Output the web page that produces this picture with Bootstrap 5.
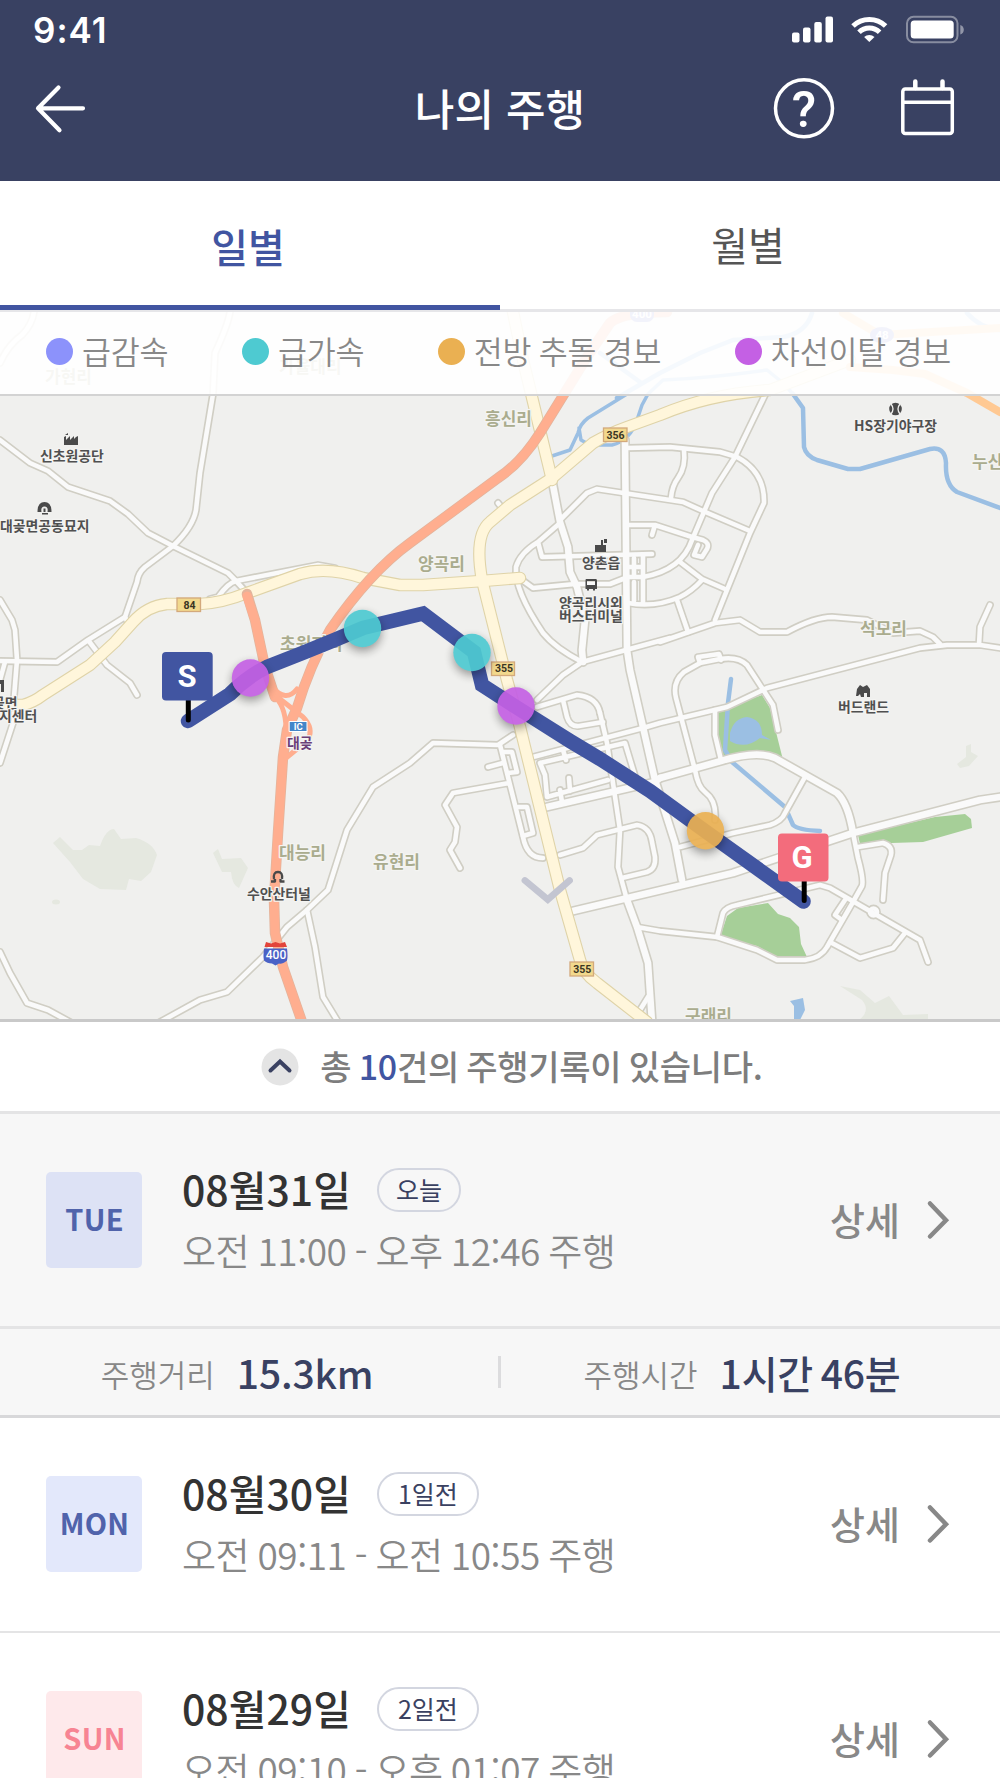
<!DOCTYPE html>
<html lang="ko">

<head>
    <meta charset="UTF-8">
    <meta name="viewport" content="width=device-width, initial-scale=1.0">
    <link href="https://cdn.jsdelivr.net/npm/bootstrap@5.3.0/dist/css/bootstrap.min.css" rel="stylesheet">
    <title>나의 주행</title>
    <style>
        body {
            width: 1000px;
            height: 1778px;
            overflow: hidden;
            background: #fff;
            font-family: "Noto Sans CJK KR", sans-serif;
            color: #888;
        }

        svg {
            display: block;
            flex: none;
        }

        .top-area {
            height: 181px;
            background: #394162;
            color: #fff;
        }

        .status-row {
            height: 58px;
            padding: 1px 34px 0 33px;
        }

        .clock {
            font: 600 35px/58px Inter, sans-serif;
            letter-spacing: 1px;
        }

        .title-row {
            display: grid;
            grid-template-columns: 1fr auto 1fr;
            height: 100px;
            padding: 0 34px;
        }

        .title-row h1 {
            padding-bottom: 2px;
            font-size: 43px;
            font-weight: 500;
            line-height: 60px;
        }

        .period-tabs {
            height: 131px;
            border-bottom: 3px solid #e6e6e9;
        }

        .period-tabs .nav-link {
            height: 128px;
            padding: 0 4px 0 0;
            border-radius: 0;
            font-size: 40px;
            line-height: 126px;
            color: #555;
        }

        .period-tabs .nav-link.active {
            height: 129px;
            line-height: 130px;
            font-weight: 500;
            color: #4155a1;
            border-bottom: 5px solid #4155a1;
        }

        .map-area {
            height: 710px;
            border-bottom: 3px solid #c9c9c9;
        }

        .legend-bar {
            height: 84px;
            padding: 0 49px 3px 46px;
            background: rgba(255, 255, 255, .9);
            border-bottom: 2px solid #d3d3d3;
            font-size: 31.5px;
            font-weight: 350;
            line-height: 40px;
            letter-spacing: -.2px;
            word-spacing: -1.2px;
        }

        .legend-bar b {
            padding-bottom: 3px;
            font-weight: 350;
        }

        .dot {
            width: 27px;
            height: 27px;
            margin-right: 9px;
            border-radius: 50%;
        }

        .dot-brake { background: #8c92fb; }
        .dot-accel { background: #4ecad1; }
        .dot-front { background: #eab052; }
        .dot-lane { background: #c460e4; }

        .summary-row {
            height: 92px;
            padding-left: 24px;
            border-bottom: 3px solid #e4e4e5;
            font-size: 34px;
            font-weight: 500;
            letter-spacing: -.25px;
            word-spacing: -2px;
            color: #7d7d7d;
        }

        .summary-row svg { margin-right: 17px; }

        .summary-row span { padding-bottom: 2px; }

        .summary-row b {
            font-weight: 500;
            color: #4155a1;
        }

        .record {
            height: 215px;
            padding: 0 49px 1px 46px;
            border-bottom: 2px solid #e4e4e5;
        }

        .record.open {
            padding-bottom: 0;
            background: #f7f7f7;
            border-bottom-width: 3px;
        }

        .day-box {
            width: 96px;
            height: 96px;
            padding: 0 0 2px 1px;
            border-radius: 5px;
            background: #e3e8fb;
            color: #5063ab;
            font-size: 29px;
            font-weight: 700;
            letter-spacing: .3px;
        }

        .open .day-box { background: #dde2f5; }

        .day-box.holiday {
            background: #fee9eb;
            color: #f78493;
        }

        .record h2 {
            padding-bottom: 3px;
            font-size: 41px;
            font-weight: 500;
            line-height: 58px;
            color: #333;
        }

        .when {
            font-size: 37px;
            font-weight: 350;
            line-height: 61px;
            letter-spacing: -.45px;
            word-spacing: -1.6px;
        }

        .ago {
            height: 44px;
            margin: 1px 0 0 26px;
            padding: 0 17px;
            border: 2px solid #d3d6e0;
            border-radius: 22px;
            font-size: 25px;
            line-height: 38px;
            color: #3a4161;
        }

        .ago-past { padding: 0 19px; }

        .detail {
            font-size: 38px;
            font-weight: 500;
            color: #888;
            text-decoration: none;
        }

        .detail span { padding-bottom: 3px; }

        .detail svg { margin-left: 25px; }

        .totals {
            height: 89px;
            background: #f7f7f7;
            border-bottom: 3px solid #d8d8da;
            font-size: 31px;
            font-weight: 350;
        }

        .totals span { padding-top: 3px; }

        .totals strong {
            margin-left: 22px;
            font-size: 39px;
            font-weight: 500;
            word-spacing: -3px;
            letter-spacing: -.2px;
            color: #394162;
        }

        .total-km {
            width: 498px;
            padding: 1px 24px 0 0;
        }

        .total-time {
            width: 499px;
            padding: 1px 17px 0 0;
        }

        .totals .vr {
            align-self: center;
            width: 3px;
            height: 32px;
            opacity: 1;
            background: #dcdcde;
        }

        /* map drawing */
        .road-edge { stroke: #d0cec4; stroke-width: 7.8; }
        .road-fill { stroke: #fafafa; stroke-width: 4.6; }
        .wide-edge { stroke: #d0cec4; stroke-width: 9.8; }
        .wide-fill { stroke: #fafafa; stroke-width: 6.6; }
        .route-edge { stroke: #dfd3a8; stroke-width: 12.5; }
        .route-fill { stroke: #fff6db; stroke-width: 10.3; }
        .water { stroke: #9bbfe3; stroke-width: 4.5; }
        .halo text { paint-order: stroke; stroke: #f4f4f2; stroke-width: 2.5px; }
        .village { font-size: 17px; font-weight: 700; fill: #aaac8e; }
        .poi { font-size: 13.9px; font-weight: 700; fill: #505050; }
        .sign { font: 700 10.5px Roboto, sans-serif; fill: #3a3524; }
        .pin-text { font: 700 31px Roboto, sans-serif; fill: #fff; }
        .event { opacity: .92; filter: drop-shadow(0 4px 5px rgba(0, 0, 0, .4)); }
    </style>
</head>

<body>
    <header class="top-area">
        <div class="status-row d-flex justify-content-between align-items-center">
            <span class="clock">9:41</span>
            <svg width="175" height="32" viewBox="791 14 175 32" fill="#fff">
                <rect x="792" y="32.5" width="7.5" height="10" rx="2" />
                <rect x="803" y="27.5" width="7.5" height="15" rx="2" />
                <rect x="814.3" y="22" width="7.5" height="20.5" rx="2" />
                <rect x="825.5" y="16.5" width="7.5" height="26" rx="2" />
                <path d="M853 26a23.5 23.5 0 0 1 32.600 0M859 32.3a14.5 14.5 0 0 1 20.600 0" fill="none" stroke="#fff" stroke-width="5" />
                <path d="M869.3 42l-5.200-5a7.500 7.500 0 0 1 10.400 0z" />
                <rect x="907" y="16.800" width="50.500" height="25.500" rx="6.500" fill="none" stroke="#fff" stroke-opacity=".4" stroke-width="2" />
                <rect x="910.700" y="20.500" width="43" height="18" rx="3.500" />
                <path d="M960.300 25v9.500q3.500-1.200 3.500-4.700T960.300 25z" fill-opacity=".45" />
            </svg>
        </div>
        <div class="title-row align-items-center">
            <a href="#" aria-label="뒤로">
                <svg width="52" height="52" viewBox="34 82 52 52" fill="none" stroke="#fff" stroke-width="4.2" stroke-linecap="round" stroke-linejoin="round">
                    <path d="M58.5 87.5L38 108.3l21.500 22M38 108.3h45" />
                </svg>
            </a>
            <h1 class="m-0">나의 주행</h1>
            <svg class="ms-auto" width="194" height="64" viewBox="772 76 194 64" fill="none" stroke="#fff" stroke-width="3.5">
                <circle cx="804" cy="108.3" r="28.5" />
                <text x="804" y="127" text-anchor="middle" font-family="Roboto, sans-serif" font-weight="500" font-size="50" fill="#fff" stroke="none">?</text>
                <rect x="902.8" y="89" width="49.5" height="44.5" rx="2.5" />
                <path d="M903 102.3h49" />
                <path d="M915.3 88v-6.500M942.5 88v-6.500" stroke-width="4.5" stroke-linecap="round" />
            </svg>
        </div>
    </header>

    <nav class="period-tabs nav nav-justified">
        <a class="nav-link active" href="#">일별</a>
        <a class="nav-link" href="#">월별</a>
    </nav>

    <section class="map-area position-relative overflow-hidden">
        <svg width="1000" height="707" viewBox="0 312 1000 707" fill="none" stroke-linejoin="round" stroke-linecap="round">
            <defs>
                <g id="smallRoads">
                    <path d="M0 440L30 463L48 471L68 487L110 501L128 514L148 533L173 546L228 573L236 581L247 593" />
                    <path d="M230 312Q228 325 215 353L213 394L200 473L196 510Q193 527 173 546L145 567Q138 573 137 582L125 617L127 621" />
                    <path d="M125 617L88 640L57 662L0 661M88 640L107 665L130 683L137 695" />
                    <path d="M0 600L12 620L15 630L17 660L14 697V720L0 763M5 662L0 680" />
                    <path d="M34 312Q32 325 22 335Q8 345 0 363" />
                    <path d="M236 581L318 565L335 568M236 581Q228 583 218 597L210 599" />
                    <path d="M627 448L670 447L720 452L737 457Q765 472 764 503L750 533L727 590L715 620" />
                    <path d="M765 395L735 457L712 493L692 540Q682 570 643 577H628L610 584H575L533 588L522 580" />
                    <path d="M560 520L587 493L597 489L670 500L683 502L703 511L750 531" />
                    <path d="M684 450Q686 467 678 478Q672 486 671 498" />
                    <path d="M627 525H655L692 537L703 540Q710 543 707 549L702 557L694 555L698 545M655 525L652 535" />
                    <path d="M560 523L538 542Q520 553 516 567Q514 590 543 633Q555 648 582 662M538 542L542 557L652 554" />
                    <path d="M643 555V603M628 603Q655 608 680 597Q692 591 702 580M634 558V575M634 582V601M641 567H628" />
                    <path d="M680 562L702 579L725 589M677 600L688 632" />
                    <path d="M670 638L582 662L563 675L537 700M537 707L577 695Q597 697 600 713" />
                    <path d="M660 642L715 623L740 620L760 632H787Q815 617 832 617L867 620L893 633L920 631L933 637L940 644" />
                    <path d="M1000 648L980 645H947L920 648L767 688L727 707L660 723L643 728L533 757M990 605L980 627L979 645" />
                    <path d="M773 705L747 665Q738 656 720 659L700 663L684 672Q672 682 676 698L695 770Q698 787 705 792Q717 801 715 820M773 705L778 730" />
                    <path d="M700 663L698 657L719 654L721 660M715 710V735L721 760" />
                    <path d="M805 777L785 813Q782 821 770 825L733 833L680 847M717 937L723 913Q726 907 737 905L820 885L830 888L920 940L928 962" />
                    <path d="M660 931L717 937L757 950L777 960H805Q821 958 827 947L853 902L862 886Q864 880 858 858L853 833M637 927L660 931" />
                    <path d="M830 942L860 958L893 948L905 933M845 900L835 915L842 920M858 847L883 843Q893 846 891 855L885 873L883 900" />
                    <path d="M513 735L498 745L433 743L410 763L373 787L347 830L328 890L307 910L287 927L263 957L227 992L200 1000L160 1022" />
                    <path d="M307 910L315 947L323 997L337 1020M0 952L10 973L27 1003L48 1010L70 1022" />
                    <path d="M500 745L523 837Q527 858 543 858M509 783L453 793L445 805L457 827L455 842L450 850L460 868" />
                    <path d="M488 767L503 763M503 752H512L517 772L508 773M518 807H527L533 833L523 836" />
                    <path d="M563 700L567 717Q570 727 579 726L603 722M540 763L545 775L547 797L608 780M540 763L625 743L635 776M563 750L566 760M569 778L570 791M560 790L562 802" />
                    <path d="M560 855L583 848L597 835L637 825Q650 827 652 842L655 857Q656 869 647 872L622 878M648 997L640 1010" />
                    <path d="M498 503L505 512" />
                    <path d="M600 713L607 743L620 830L618 867L627 900" />
                    <circle cx="873.5" cy="912" r="3.5" />
                </g>
                <g id="wideRoads">
                    <path d="M552 480L560 522L568 547L570 572L577 587L585 620L582 650L583 662" />
                    <path d="M625 440L627 650L630 670L643 727L655 780L675 843L682 880" />
                    <path d="M627 900L637 927L648 963L652 1022" />
                    <path d="M660 778L721 761Q757 750 775 758L837 793Q848 803 853 833L733 873L573 911M853 833L980 800L1000 797" />
                    <path d="M547 807L655 782L660 778" />
                </g>
                <g id="yellowRoads">
                    <path d="M513 312L523 360L552 480" />
                    <path d="M0 705H23Q34 702 43 695L90 665L115 642L133 622Q147 606 167 604H200Q222 603 247 593L300 574Q327 566 363 578L400 585H423L482 581L520 578" />
                    <path d="M850 360L770 390Q710 394 660 415L627 427Q610 433 593 443L552 478L510 505L490 522Q474 535 482 580L507 680L520 727L560 890L580 960Q583 973 597 983L647 1022" />
                </g>
            </defs>
            <rect y="312" width="1000" height="707" fill="#f0f0ee" />

            <!-- hills and parks -->
            <g fill="#e5e8e0">
                <path d="M53 843L60 837L73 850L82 850L89 845L100 846Q106 829 114 829L121 839L136 838Q153 843 157 855L151 872L141 881L129 879L126 890L100 889L83 879L70 862z" />
                <path d="M213 853L218 849L222 859L241 858L248 868L239 888Q232 885 231 872L222 872z" />
                <ellipse cx="56" cy="902" rx="4" ry="2.5" />
                <path d="M957 764L966 757V746L971 744V752L978 756L969 766L960 768z" />
                <path d="M840 986L860 990L875 1003L889 996L903 1015L928 1014V1022H856Q872 1012 862 1000z" />
            </g>
            <g fill="#a6cf98">
                <path d="M718 711L762 695L770 708L783 760Q765 750 723 760L717 738z" />
                <path d="M858 835L935 817L965 814L971 819L972 828L923 842L860 844z" />
                <path d="M720 937L727 916L738 908L768 903L778 914L790 918L799 927L801 944L807 957H777L757 946z" />
            </g>

            <g class="water">
                <path d="M627 394L588 418Q580 424 578 433L570 450L552 456M579 428L581 440L590 445H612Q630 441 637 420L642 405L648 394L663 380Q710 378 767 370L783 383L793 394" stroke-width="3.5" />
                <path d="M793 394L803 408L804 447Q806 456 817 460L848 469H860L930 449Q945 446 946 463Q945 485 957 492L1000 508" />
                <path d="M812 313Q806 333 783 337L733 340L700 353L660 373L617 398M600 353L640 382M967 313Q980 328 1000 330" />
                <path d="M731 679L728 703L725 750L732 762L785 807L793 825Q798 830 820 831" />
            </g>
            <path d="M730 733Q734 718 747 717Q762 719 762 735L771 740L760 738Q745 750 730 741z" fill="#9bbfe3" />
            <path d="M790 1001L803 998L805 1010L799 1022H794V1006z" fill="#9bbfe3" />

            <use href="#smallRoads" class="road-edge" />
            <use href="#wideRoads" class="wide-edge" />
            <use href="#smallRoads" class="road-fill" />
            <use href="#wideRoads" class="wide-fill" />
            <use href="#yellowRoads" class="route-edge" />
            <use href="#yellowRoads" class="route-fill" />

            <!-- expressways -->
            <path d="M843 313L880 335L1000 328M850 367L893 370L925 374L967 393L1000 412" stroke="#ffc993" stroke-width="8" />
            <g stroke="#e3b49c" stroke-width="10.5">
                <path d="M667 312Q622 312 610 323L587 357L540 433Q521 463 498 478L410 543Q370 572 330 630Q310 665 297 708L287 730L283 757L278 833L274 900L275 933L283 967L302 1022" />
                <path d="M247 594L255 620L265 667L275 697" />
            </g>
            <g stroke="#ffae8f">
                <path d="M667 312Q622 312 610 323L587 357L540 433Q521 463 498 478L410 543Q370 572 330 630Q310 665 297 708L287 730L283 757L278 833L274 900L275 933L283 967L302 1022" stroke-width="9" />
                <path d="M247 596L255 620L265 667L275 697" stroke-width="9" />
                <path d="M272 687Q286 703 297 689M275 697Q287 708 286 735M280 699L303 717Q314 728 308 740L286 758" stroke-width="5" />
            </g>

            <g class="halo" font-family="Noto Sans CJK KR, sans-serif">
                <g class="village">
                    <text x="45" y="383">가현리</text>
                    <text x="279" y="373">가율대리</text>
                    <text x="485" y="425">흥신리</text>
                    <text x="418" y="570">양곡리</text>
                    <text x="280" y="650">초원지리</text>
                    <text x="860" y="635">석모리</text>
                    <text x="972" y="468">누산리</text>
                    <text x="279" y="859">대능리</text>
                    <text x="373" y="868">유현리</text>
                    <text x="685" y="1022">구래리</text>
                </g>
                <g class="poi">
                    <text x="40" y="461">신초원공단</text>
                    <text x="0" y="531">대곶면공동묘지</text>
                    <text x="-8" y="708">곶면</text>
                    <text x="-1" y="721">지센터</text>
                    <text x="854" y="431">HS장기야구장</text>
                    <text x="582" y="568">양촌읍</text>
                    <text x="559" y="608">양곡리시외</text>
                    <text x="559" y="620.5">버스터미널</text>
                    <text x="838" y="712">버드랜드</text>
                    <text x="247" y="899">수안산터널</text>
                    <text x="287" y="747.5" fill="#6b3f78">대곶</text>
                </g>
            </g>

            <!-- place symbols -->
            <g fill="#4a4a4a">
                <path d="M64 445v-8l2-1v4l4-4v4l4-4v3l2-2 2-1v9zM65 435l3-2v2z" />
                <path d="M37.500 512q0-10 7-10t7 10h-4q1-5.500-3-5.500t-3 5.500z M42 513h6v1.500h-6zM43.500 508.500h2v3.500h-2z" />
                <circle cx="895.5" cy="409" r="6.3" />
                <path d="M891 404q4 5 0 10M900 404q-4 5 0 10" stroke="#f0f0ee" stroke-width="1.3" fill="none" />
                <path d="M595 545h7v7h-7zM601 540h2v12h-2zM604 539h3v4h-3zM603 545h3v7h-3z" />
                <path d="M586 579h10q1 0 1 2v8h-2v1.500h-2V589h-4v1.500h-2V589h-1.500v-8q0-2 .5-2zm1 2v4h8v-4z" fill-rule="evenodd" />
                <path d="M857 689l3-4 3 2 4-2 3 4v8h-3v-4h-3v4h-3l-1-3-2 2h-2z" />
                <path d="M0 680h4v12H1v-8H0z" />
            </g>
            <path d="M274 879q-1-7 4-7t4 7M271 881.500h4v-2.500M284.500 881.500h-4v-2.500" stroke="#4a4a4a" stroke-width="2.300" stroke-linecap="butt" />

            <!-- road signs -->
            <g fill="#f2d98d" stroke="#d3a97c" stroke-width="1.3" stroke-linejoin="miter">
                <rect x="177" y="598" width="23.5" height="13.5" />
                <rect x="603.5" y="428" width="23.5" height="13.5" />
                <rect x="491.5" y="662" width="23" height="13.5" />
                <rect x="570" y="962" width="23.5" height="14" />
            </g>
            <g class="sign" text-anchor="middle">
                <text x="189.5" y="608.5">84</text>
                <text x="615.5" y="438.5">356</text>
                <text x="504" y="672.3">355</text>
                <text x="582.3" y="972.6">355</text>
            </g>
            <rect x="289.5" y="721.5" width="17.5" height="10" fill="#4386c9" stroke="#fff" />
            <text x="298.2" y="730" text-anchor="middle" font-family="Roboto, sans-serif" font-weight="700" font-size="9.5" fill="#fff">IC</text>
            <path d="M264.500 947l1.500-5 5 1.500 4.500-1.500 4.500 1.500 5-1.500 2 5z" fill="#e2443b" />
            <path d="M264 948.500h23q1 8 0 12-5 4-8 3l-3.500 2-3.500-2q-5 0-8-3-1-4 0-12z" fill="#4a62c6" />
            <text x="276" y="959.300" text-anchor="middle" font-family="Roboto, sans-serif" font-weight="500" font-size="12" fill="#fff">400</text>
            <g fill="#7e87cf">
                <rect x="630" y="306" width="24" height="16" rx="7" />
                <ellipse cx="882" cy="335" rx="12" ry="8" />
            </g>
            <g font-family="Roboto, sans-serif" font-weight="700" font-size="11.5" fill="#fff" text-anchor="middle">
                <text x="642" y="318">400</text>
                <text x="882" y="339">48</text>
            </g>

            <!-- driven route -->
            <path d="M188 721L230 694Q248 676 267 667L305 652Q335 640 363 628L423 613.5L474 652L482 685L516 707L570 741L600 759L650 791L705 831L803.5 901.5" stroke="#4155a1" stroke-width="14.5" stroke-linejoin="miter" />
            <path d="M188.3 700v20M804.2 880v20.5" stroke="#000" stroke-width="5" />
            <rect x="162" y="652" width="50.7" height="48.5" rx="4" fill="#4155a1" />
            <rect x="778" y="833.5" width="50.5" height="48" rx="4" fill="#f36c7c" />
            <text class="pin-text" x="187" y="686.5" text-anchor="middle">S</text>
            <text class="pin-text" x="802" y="867.5" text-anchor="middle">G</text>
            <circle class="event" cx="250.5" cy="678" r="18.7" fill="#c460e4" />
            <circle class="event" cx="362.5" cy="628.5" r="18.7" fill="#4ecad1" />
            <circle class="event" cx="472" cy="652.5" r="18.7" fill="#4ecad1" />
            <circle class="event" cx="516" cy="706" r="18.7" fill="#c460e4" />
            <circle class="event" cx="705.5" cy="830.8" r="18.7" fill="#eab052" />
            <path d="M525 880.5L547.8 899.5L569.5 880.5" stroke="#c3c5d1" stroke-width="6.8" stroke-linejoin="miter" />
        </svg>

        <div class="legend-bar position-absolute top-0 start-0 w-100 d-flex justify-content-between align-items-center">
            <span class="d-flex align-items-center"><i class="dot dot-brake"></i><b>급감속</b></span>
            <span class="d-flex align-items-center"><i class="dot dot-accel"></i><b>급가속</b></span>
            <span class="d-flex align-items-center"><i class="dot dot-front"></i><b>전방 추돌 경보</b></span>
            <span class="d-flex align-items-center"><i class="dot dot-lane"></i><b>차선이탈 경보</b></span>
        </div>
    </section>

    <div class="summary-row d-flex justify-content-center align-items-center">
        <svg width="42" height="38" viewBox="0 0 42 38">
            <circle cx="19" cy="19" r="18.5" fill="#e4e4e4" />
            <path d="M9.5 22.5L19 13.5l9.500 9" fill="none" stroke="#3a4161" stroke-width="4" stroke-linecap="round" />
        </svg>
        <span>총 <b>10</b>건의 주행기록이 있습니다.</span>
    </div>

    <main>
        <article class="record open d-flex align-items-center">
            <div class="day-box d-flex justify-content-center align-items-center">TUE</div>
            <div class="ms-4 ps-3 flex-grow-1">
                <div class="d-flex align-items-center">
                    <h2 class="mb-0">08월31일</h2>
                    <span class="ago">오늘</span>
                </div>
                <div class="when">오전 11:00 - 오후 12:46 주행</div>
            </div>
            <a class="detail d-flex align-items-center" href="#"><span>상세</span>
                <svg width="26" height="40" viewBox="0 0 26 40" fill="none" stroke="#888" stroke-width="4.5" stroke-linecap="round"><path d="M5 3.5l16 16.800L5 36.5" /></svg>
            </a>
        </article>

        <div class="totals d-flex align-items-center">
            <div class="total-km d-flex justify-content-center align-items-center"><span>주행거리</span><strong>15.3km</strong></div>
            <div class="vr"></div>
            <div class="total-time d-flex justify-content-center align-items-center"><span>주행시간</span><strong>1시간 46분</strong></div>
        </div>

        <article class="record d-flex align-items-center">
            <div class="day-box d-flex justify-content-center align-items-center">MON</div>
            <div class="ms-4 ps-3 flex-grow-1">
                <div class="d-flex align-items-center">
                    <h2 class="mb-0">08월30일</h2>
                    <span class="ago ago-past">1일전</span>
                </div>
                <div class="when">오전 09:11 - 오전 10:55 주행</div>
            </div>
            <a class="detail d-flex align-items-center" href="#"><span>상세</span>
                <svg width="26" height="40" viewBox="0 0 26 40" fill="none" stroke="#888" stroke-width="4.5" stroke-linecap="round"><path d="M5 3.5l16 16.800L5 36.5" /></svg>
            </a>
        </article>

        <article class="record d-flex align-items-center">
            <div class="day-box holiday d-flex justify-content-center align-items-center">SUN</div>
            <div class="ms-4 ps-3 flex-grow-1">
                <div class="d-flex align-items-center">
                    <h2 class="mb-0">08월29일</h2>
                    <span class="ago ago-past">2일전</span>
                </div>
                <div class="when">오전 09:10 - 오후 01:07 주행</div>
            </div>
            <a class="detail d-flex align-items-center" href="#"><span>상세</span>
                <svg width="26" height="40" viewBox="0 0 26 40" fill="none" stroke="#888" stroke-width="4.5" stroke-linecap="round"><path d="M5 3.5l16 16.800L5 36.5" /></svg>
            </a>
        </article>
    </main>

    <script src="https://cdn.jsdelivr.net/npm/bootstrap@5.3.0/dist/js/bootstrap.bundle.min.js"></script>
</body>

</html>
